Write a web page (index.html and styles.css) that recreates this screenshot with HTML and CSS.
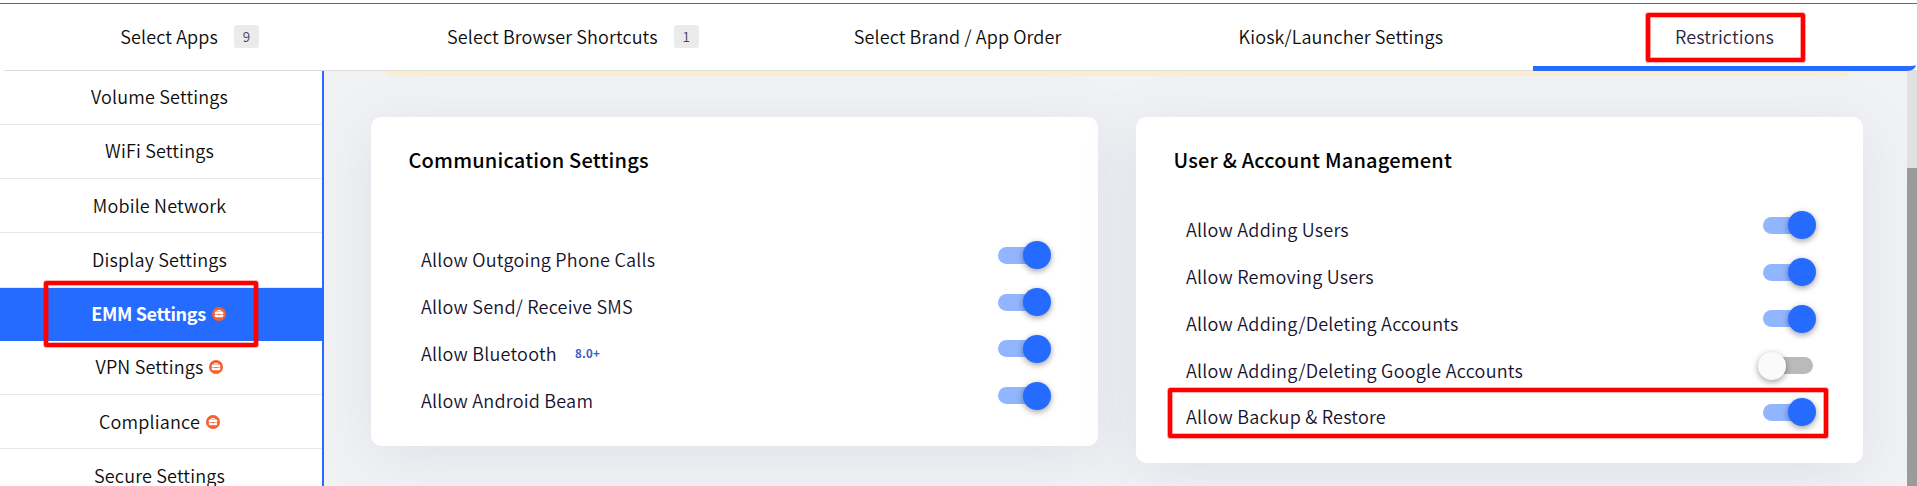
FILE: index.html
```
<!DOCTYPE html>
<html lang="en">
<head>
<meta charset="utf-8">
<title>Restrictions</title>
<link rel="stylesheet" href="styles.css">
</head>
<body>
<svg width="0" height="0" class="defs">
  <symbol id="case" viewBox="0 0 14 14">
    <circle cx="7" cy="7" r="7" fill="#f4602f"/>
    <path d="M5.3 4.6V3.5h3.4v1.1" fill="none" stroke="#fff" stroke-width="1"/>
    <rect x="2.8" y="4.4" width="8.4" height="5.8" rx="1" fill="#fff"/>
    <path d="M2.8 7.5h8.4" stroke="#f4602f" stroke-width=".6"/>
    <rect x="6.2" y="6.9" width="1.6" height="1.3" fill="#f4602f"/>
  </symbol>
</svg>
<nav class="tabs">
  <a class="tab counted"><span>Select Apps</span><span class="count">9</span></a>
  <a class="tab counted"><span>Select Browser Shortcuts</span><span class="count">1</span></a>
  <a class="tab"><span>Select Brand / App Order</span></a>
  <a class="tab"><span>Kiosk/Launcher Settings</span></a>
  <a class="tab active"><span>Restrictions</span></a>
</nav>
<div class="body">
  <aside class="side">
    <a class="item"><span>Volume Settings</span></a>
    <a class="item"><span>WiFi Settings</span></a>
    <a class="item tall"><span>Mobile Network</span></a>
    <a class="item last"><span>Display Settings</span></a>
    <a class="item on"><span>EMM Settings</span><svg class="ico"><use href="#case"/></svg></a>
    <a class="item"><span>VPN Settings</span><svg class="ico"><use href="#case"/></svg></a>
    <a class="item tall"><span>Compliance</span><svg class="ico"><use href="#case"/></svg></a>
    <a class="item tall"><span>Secure Settings</span></a>
  </aside>
  <main class="content">
    <div class="notice"></div>
    <div class="cards">
      <section class="card comm">
        <h2>Communication Settings</h2>
        <div class="row"><span>Allow Outgoing Phone Calls</span><i class="sw"></i></div>
        <div class="row"><span>Allow Send/ Receive SMS</span><i class="sw"></i></div>
        <div class="row"><span>Allow Bluetooth</span><b class="ver">8.0+</b><i class="sw"></i></div>
        <div class="row"><span>Allow Android Beam</span><i class="sw"></i></div>
      </section>
      <section class="card user">
        <h2>User &amp; Account Management</h2>
        <div class="row"><span>Allow Adding Users</span><i class="sw"></i></div>
        <div class="row"><span>Allow Removing Users</span><i class="sw"></i></div>
        <div class="row"><span>Allow Adding/Deleting Accounts</span><i class="sw"></i></div>
        <div class="row"><span>Allow Adding/Deleting Google Accounts</span><i class="sw off"></i></div>
        <div class="row"><span>Allow Backup &amp; Restore</span><i class="sw"></i></div>
      </section>
    </div>
  </main>
  <div class="scroll"><div class="thumb"></div></div>
</div>
<div class="mark mark-tab"></div>
<div class="mark mark-side"></div>
<div class="mark mark-row"></div>
</body>
</html>
```
FILE: styles.css
```
* { box-sizing: border-box; }
body {
  margin: 0;
  height: 486px;
  overflow: hidden;
  position: relative;
  background: #fff;
  padding-top: 3px;
  font-family: "Noto Sans CJK SC", "Noto Sans", sans-serif;
  font-size: 18px;
  font-weight: 350;
  color: #0c0c0c;
  white-space: nowrap;
}
.defs { position: absolute; }
.tabs {
  display: grid;
  grid-template-columns: repeat(4, 383.25px) 383px;
  height: 68px;
  border-top: 1px solid #266bff;
  background: linear-gradient(#dcdcdc, #dcdcdc) 4px 100% / 100% 1px no-repeat;
}
.tab {
  display: flex;
  align-items: center;
  justify-content: center;
  padding: 0 1px 4px 0;
  line-height: 24px;
  letter-spacing: .12px;
}
.tab.counted { padding-right: 4px; }
.count {
  margin-left: 16px;
  width: 25px;
  height: 23px;
  position: relative;
  top: 1px;
  border-radius: 3px;
  background: #ebebeb;
  color: #4a4560;
  font-size: 13.5px;
  line-height: 22px;
  text-align: center;
}
.tab.active {
  padding: 2px 0 0;
  border-bottom: 5px solid #266bff;
  border-bottom-right-radius: 9px 6px;
  color: #2b2640;
}
.body { display: flex; height: 415px; }
.side { width: 324px; border-right: 2px solid #266bff; background: #fff; }
.item {
  display: flex;
  align-items: center;
  justify-content: center;
  height: 54px;
  padding: 0 3px 4px 0;
  line-height: 24px;
  letter-spacing: .18px;
  border-bottom: 1px solid #e8e8e8;
}
.item.tall { padding-bottom: 2px; }
.item.last { height: 55px; padding-bottom: 3px; }
.item.on {
  height: 53px;
  padding-right: 5px;
  border: 0;
  background: #266bff;
  color: #fff;
  font-weight: 700;
  letter-spacing: -.35px;
}
.ico { position: relative; top: 1px; width: 14px; height: 14px; margin-left: 6px; flex: none; }
.content { flex: 1; background: #f1f2f4; overflow: hidden; }
.notice {
  height: 5px;
  margin: 0 57px 0 61px;
  background: #faeecb;
  border-radius: 0 0 8px 8px;
}
.cards { display: flex; gap: 38px; align-items: flex-start; padding: 41px 0 0 47px; }
.card {
  width: 727px;
  padding: 31px 38px 0;
  border-radius: 10px;
  background: #fff;
  box-shadow: 0 10px 60px rgba(90, 105, 160, .12);
}
.comm { height: 329px; }
.user { height: 346px; }
h2 {
  margin: 0;
  height: 24px;
  font-size: 20px;
  line-height: 24px;
  font-weight: 500;
  letter-spacing: .2px;
  color: #000;
  text-indent: -.5px;
}
.comm h2 { margin-bottom: 60px; }
.user h2 { margin-bottom: 30px; }
.row {
  display: flex;
  align-items: center;
  height: 46.75px;
  padding-left: 12px;
  color: #15112d;
  line-height: 24px;
  letter-spacing: .23px;
}
.row span, .ver { position: relative; top: 4px; }
.ver { margin-left: 18px; font-size: 11.5px; color: #3f57c4; letter-spacing: .3px; }
.sw {
  position: relative;
  width: 50px;
  height: 17px;
  margin-left: auto;
  margin-right: 12px;
  border-radius: 9px;
  background: #92b5ff;
}
.sw::after {
  content: "";
  position: absolute;
  right: -3px;
  top: -5.5px;
  width: 28px;
  height: 28px;
  border-radius: 50%;
  background: #266bff;
  box-shadow: 0 2px 6px rgba(0, 0, 0, .38);
}
.sw.off { background: #bababa; }
.sw.off::after { left: -5px; background: #fafafa; }
.scroll { width: 10px; background: #e0e2e1; padding-top: 97px; }
.thumb { height: 318px; background: #9b9b9b; }
.mark {
  position: absolute;
  border: 4px solid #f00;
  border-radius: 2px;
  box-shadow: 0 0 0 .6px rgba(255, 0, 0, .6), inset 0 0 0 .6px rgba(255, 0, 0, .6);
}
.mark-tab { left: 1646px; top: 13px; width: 159px; height: 49px; }
.mark-side { left: 44px; top: 281px; width: 214px; height: 66px; }
.mark-row { left: 1168px; top: 388px; width: 660px; height: 50px; }
```
